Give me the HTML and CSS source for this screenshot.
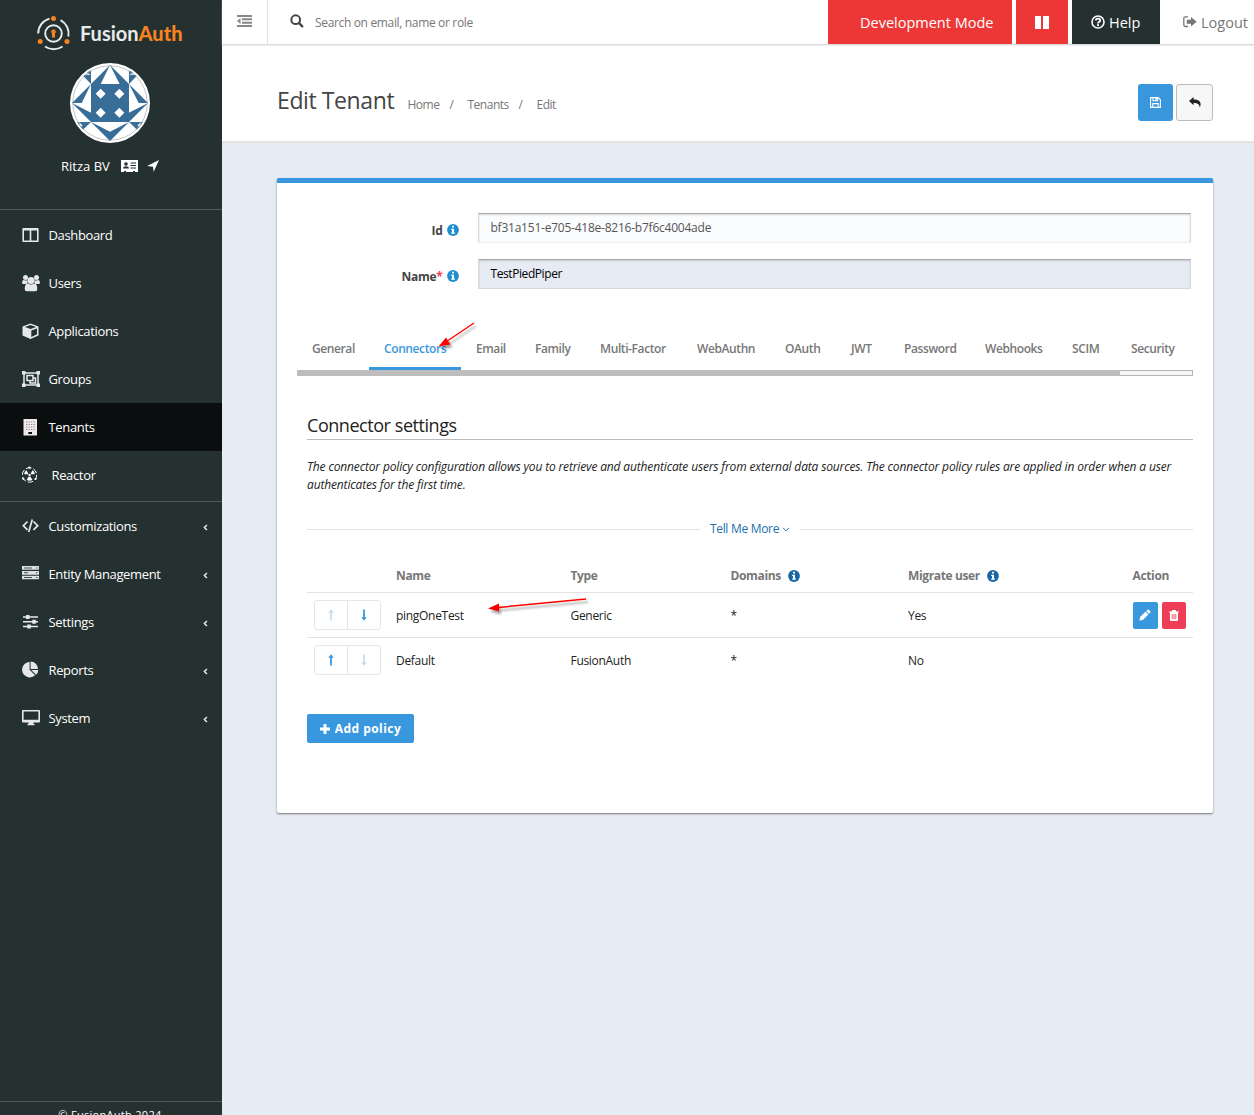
FILE: index.html
```html
<!DOCTYPE html>
<html lang="en">
<head>
<meta charset="utf-8">
<title>Edit Tenant | FusionAuth</title>
<link rel="stylesheet" href="styles.css">
</head>
<body>
<svg class="defs" width="0" height="0">
  <symbol id="info" viewBox="0 0 12 12"><circle cx="6" cy="6" r="5.900" fill="currentColor"/><path d="M5 1.800h2v1.800H5zM4.200 4.700H7v3.800h.9v1.300H4.200V8.500H5V6h-.8z" fill="#fff"/></symbol>
  <symbol id="up" viewBox="0 0 6 12"><path d="M3 .3L5.800 3.700H3.900V11.500H2.100V3.700H.2z" fill="currentColor"/></symbol>
  <symbol id="down" viewBox="0 0 6 12"><path d="M3 11.700L5.800 8.300H3.900V.5H2.100V8.300H.2z" fill="currentColor"/></symbol>
  <symbol id="chev" viewBox="0 0 5 7"><path d="M4 1L1.300 3.500 4 6" fill="none" stroke="currentColor" stroke-width="1.200"/></symbol>
</svg>
<div class="app">
  <aside class="sidebar">
    <div class="logo">
      <svg width="36" height="36" viewBox="0 0 36 36" fill="none">
        <g stroke="#e8ebeb" stroke-width="1.900">
          <path d="M13.500 2.600A15.400 15.400 0 0 0 2.200 17.500"/>
          <path d="M24.600 4.100A15.400 15.400 0 0 1 32.400 20.500"/>
          <path d="M9 30.500A15.400 15.400 0 0 0 26.500 30.500"/>
          <circle cx="17.500" cy="17.500" r="8.300"/>
        </g>
        <g fill="#f58320"><circle cx="17.500" cy="2.600" r="2.500"/><circle cx="4.200" cy="25.500" r="2.500"/><circle cx="31" cy="25.500" r="2.500"/><path d="M17.500 13.500a2.200 2.200 0 0 1 1.500 3.900v4H16v-4a2.200 2.200 0 0 1 1.500-3.900z"/></g>
      </svg>
      <span class="brand">Fusion<b>Auth</b></span>
    </div>
    <div class="avatar">
      <svg width="76" height="76" viewBox="0 0 228 228">
        <g fill="#386d98">
          <path d="M57 57h114v114H57zM114 0l57 57H57zM57 171l57 57 57-57-57 29z"/>
          <path d="M57 57L0 114h29zM0 114l57 57v-28zM171 57l57 57h-28zM228 114l-57 57v-28z"/>
          <path d="M30 29h27v28zM57 14v15L42 22zM198 29h-27v28zM171 14v15l15-7zM10 171h47l-29 28zM218 171h-47l29 28z"/>
        </g>
        <path fill="#fff" d="M114 0l29 57H86zM86 71l15 15-15 15-15-15zM142 71l15 15-15 15-15-15zM86 128l15 15-15 15-15-15zM142 128l15 15-15 15-15-15zM22 172l10 10-10 4zM206 172l-10 10 10 4z"/>
        <circle cx="114" cy="114" r="112" fill="none" stroke="#999" stroke-width="2"/>
      </svg>
    </div>
    <div class="user">
      <span>Ritza BV</span>
      <svg width="17" height="12" viewBox="0 0 17 12"><path fill="#fff" d="M0 0h17v12h-3v-1h-2v1H5v-1H3v1H0z"/><g fill="#253030"><circle cx="5" cy="4" r="1.800"/><path d="M2 8.500c0-3 6-3 6 0zM9.500 2.500H15v1H9.500zM9.500 5H15v1H9.500zM9.500 7.500H15v1H9.500z"/></g></svg>
      <svg width="12" height="12" viewBox="0 0 12 12"><path fill="#fff" d="M12 0L6.700 11.800 6 6.700.1 5.900z"/></svg>
    </div>
    <nav class="nav">
      <a><svg viewBox="0 0 18 18"><path fill="#e6e8e8" fill-rule="evenodd" d="M1.200 2h14.600q.8 0 .8.800v12.400q0 .8-.8.800H1.200q-.8 0-.8-.8V2.800q0-.8.800-.8zM2 4.500v9.900h5.700V4.500zm7.300 0v9.900H15V4.500z"/></svg><span>Dashboard</span></a>
      <a><svg viewBox="0 0 18 18"><g fill="#e6e8e8"><circle cx="3.500" cy="3.500" r="2.500"/><circle cx="14.500" cy="3.500" r="2.500"/><path d="M0 9.500q0-4 2.200-3.500 1.400 1 2.800.2l.6 2.200-1.100 1.500H1.200Q0 9.900 0 9zM18 9.500q0-4-2.200-3.500-1.400 1-2.800.2l-.6 2.200 1.100 1.500h3.300q1.200 0 1.200-.9z"/><circle cx="9" cy="6.500" r="3.600"/><path d="M2.700 15.200Q2.700 9.500 5.700 9.500q3.300 2 6.600 0 3 0 3 5.700 0 2.100-2 2.100H4.700q-2 0-2-2.100z"/></g></svg><span>Users</span></a>
      <a><svg viewBox="0 0 18 18"><path fill="#e6e8e8" fill-rule="evenodd" d="M8.500 1.500L16.500 4.400v9L8.500 17 .5 13.400v-9zM8.500 3L3 5l5.500 2L14 5zM9.300 8.500v6.400L15 12.300V6.400z"/></svg><span>Applications</span></a>
      <a><svg viewBox="0 0 18 18"><g fill="none" stroke="#e6e8e8" stroke-width="1.500"><path d="M2 3h14v12H2z"/><path d="M5 5.500h6v5H5z"/><path d="M11 8h2.500v5H8v-2.500"/></g><path fill="#e6e8e8" d="M0 1h3.500v3.500H0zM14.500 1H18v3.500h-3.500zM0 13.500h3.500V17H0zM14.500 13.500H18V17h-3.500z"/></svg><span>Groups</span></a>
      <a class="active"><svg viewBox="0 0 18 18"><path fill="#f0e8e8" d="M1.500 1h13.500v16.500H1.500z"/><path fill="none" stroke="#888" stroke-width="1.200" stroke-dasharray="1.200 1.300" d="M4 4h9.500M4 6.500h9.500M4 9h9.500M4 11.500h9.500"/><path fill="#0a0e0e" d="M6.300 14H10v2H6.300z"/></svg><span>Tenants</span></a>
      <a class="reactor"><svg viewBox="0 0 18 18"><circle cx="7.500" cy="9" r="7.200" fill="none" stroke="#fff" stroke-width="1" stroke-dasharray="5.500 2.040"/><g fill="#fff"><circle cx="7.500" cy="9" r="1.200"/><path d="M6.300 7.400L4.400 4.300Q2.300 5.500 2.200 8.200h3.600zM8.700 7.400l1.900-3.100q2.100 1.200 2.200 3.900H9.200zM6.500 10.800l-1.900 3.200q2.900 1.600 5.800 0l-1.900-3.200z"/><circle cx="7.500" cy="1.600" r="1.200"/><circle cx="1.300" cy="12.800" r="1.100"/><circle cx="13.700" cy="12.800" r="1.100"/></g></svg><span>Reactor</span></a>
    </nav>
    <nav class="nav lower">
      <a><svg viewBox="0 0 18 18"><path fill="none" stroke="#e6e8e8" stroke-width="1.700" d="M5.500 4.500L1.300 8.700l4.200 4.200M11.500 4.500l4.200 4.200-4.200 4.200M10.300 2.500L6.700 14.900"/></svg><span>Customizations</span><svg class="chev"><use href="#chev"/></svg></a>
      <a><svg viewBox="0 0 18 18"><path fill="#dfe2e2" d="M0 1h17v3.800H0zM0 5.900h17v3.800H0zM0 10.800h17v3.400H0z"/><path stroke="#444e4e" stroke-width="1" d="M2 3h8M2 7.700h4M2 12.500h8M14 3h1.500M14 7.700h1.500M14 12.500h1.500"/></svg><span>Entity Management</span><svg class="chev"><use href="#chev"/></svg></a>
      <a><svg viewBox="0 0 18 18"><path stroke="#e6e8e8" stroke-width="1.500" d="M1 4h15M1 8.800h15M1 13.500h15"/><path fill="#e6e8e8" d="M4 2h3.500v4H4zM10.300 6.800h3.500v4h-3.500zM5.300 11.500h3.500v4H5.300z"/></svg><span>Settings</span><svg class="chev"><use href="#chev"/></svg></a>
      <a><svg viewBox="0 0 18 18"><path fill="#e6e8e8" d="M7.600 1v7.800l5.500 5.500A7.700 7.700 0 1 1 7.600 1zM8.600.6a7.400 7.400 0 0 1 7.400 7.400H8.600zM9.300 9h7a7 7 0 0 1-2.200 4.800z"/></svg><span>Reports</span><svg class="chev"><use href="#chev"/></svg></a>
      <a><svg viewBox="0 0 18 18"><path fill="#e6e8e8" fill-rule="evenodd" d="M1 1h16q1 0 1 1v10.500q0 1-1 1h-5.500V15h1v1.300h-7V15h1v-1.500H1q-1 0-1-1V2q0-1 1-1zm.6 1.500v8.300h14.800V2.500z"/></svg><span>System</span><svg class="chev"><use href="#chev"/></svg></a>
    </nav>
    <footer class="foot">© FusionAuth 2024</footer>
  </aside>

  <div class="main">
    <header class="topbar">
      <div class="toggle"><svg width="15" height="12" viewBox="0 0 15 12"><path fill="#888" d="M0 0h15v2H0zM5 3.300h10v2H5zM5 6.700h10v2H5zM0 10h15v2H0zM0 6l3.500-3v6z"/></svg></div>
      <div class="search">
        <svg width="14" height="14" viewBox="0 0 14 14"><circle cx="5.700" cy="5.700" r="4.400" fill="none" stroke="#444" stroke-width="2"/><path d="M9 9l3.300 3.300" stroke="#444" stroke-width="2.400" stroke-linecap="round"/></svg>
        <span>Search on email, name or role</span>
      </div>
      <div class="dev"><span>Development Mode</span></div>
      <div class="pause"><svg width="14" height="13" viewBox="0 0 14 13"><path fill="#fff" d="M0 0h6v13H0zM8 0h6v13H8z"/></svg></div>
      <div class="help"><svg width="14" height="14" viewBox="0 0 14 14"><circle cx="7" cy="7" r="6" fill="none" stroke="#fff" stroke-width="1.600"/><path fill="none" stroke="#fff" stroke-width="1.800" d="M4.800 5.400C5 3 9.200 3.200 9.200 5.400 9.200 6.900 7 6.800 7 8.500"/><path fill="#fff" d="M6 9.300h2v1.800H6z"/></svg><span>Help</span></div>
      <div class="logout"><svg width="14" height="12" viewBox="0 0 14 12"><path fill="none" stroke="#777" stroke-width="1.300" d="M5 .9H2.500Q.8.900.8 2.600v6.200q0 1.700 1.700 1.700H5"/><path fill="#777" d="M3.800 3.700H8V.9L13.600 5.700 8 10.500V7.700H3.800z"/></svg><span>Logout</span></div>
    </header>

    <div class="pagehead">
      <h1>Edit Tenant</h1>
      <div class="crumbs"><span class="c1">Home</span><span class="s1">/</span><span class="c2">Tenants</span><span class="s2">/</span><span class="c3">Edit</span></div>
      <div class="tools">
        <button class="save"><svg width="11" height="11" viewBox="0 0 11 11"><path fill="none" stroke="#fff" stroke-width="1.100" d="M.6.600h7.600l2.200 2.200v7.600H.6zM2.800 10V6.600h5.400V10M3 .8v3h4.500v-3"/><path fill="#fff" d="M5.400 1h1.400v2.200H5.400z"/></svg></button>
        <button class="back"><svg width="12" height="11" viewBox="0 0 12 11"><path fill="#222" d="M0 4L4.600 0v2.400c5 0 7 2 7 4.700 0 1.500-.4 2.500-1 3.400 0-3-1.600-4.500-6-4.500v2.200z"/></svg></button>
      </div>
    </div>

    <section class="card">
      <div class="form">
        <label><span>Id</span><svg width="12" height="12"><use href="#info"/></svg></label><div class="input disabled">bf31a151-e705-418e-8216-b7f6c4004ade</div>
        <label><span>Name</span><em>*</em><svg width="12" height="12"><use href="#info"/></svg></label><div class="input filled">TestPiedPiper</div>
      </div>
      <div class="tabs">
        <span>General</span><span class="on">Connectors</span><span>Email</span><span>Family</span><span>Multi-Factor</span><span>WebAuthn</span><span>OAuth</span><span>JWT</span><span>Password</span><span>Webhooks</span><span>SCIM</span><span>Security</span>
      </div>
      <div class="scroll"><div class="thumb"></div></div>
      <div class="panel">
        <h2>Connector settings</h2>
        <p class="intro"><span>The connector policy configuration allows you to retrieve and authenticate users from external data sources. The connector policy rules are applied in order when a user</span> <span>authenticates for the first time.</span></p>
        <div class="more"><span>Tell Me More</span><svg width="8" height="5" viewBox="0 0 8 5"><path fill="none" stroke="#1a6fae" d="M1 .8l3 3 3-3"/></svg></div>
        <div class="table">
          <div class="row head"><span></span><span>Name</span><span>Type</span><span>Domains<svg width="12" height="12"><use href="#info"/></svg></span><span>Migrate user<svg width="12" height="12"><use href="#info"/></svg></span><span>Action</span></div>
          <div class="row"><span class="order"><b class="off"><svg width="6" height="12"><use href="#up"/></svg></b><b><svg width="6" height="12"><use href="#down"/></svg></b></span><span class="cell">pingOneTest</span><span class="cell">Generic</span><span class="cell">*</span><span class="cell">Yes</span>
            <span class="acts"><button class="edit"><svg width="12" height="12" viewBox="0 0 12 12"><path fill="#fff" d="M.5 11.500l.6-3.400 5.500-5.500 2.800 2.800-5.500 5.500zM7.300 1.900L8.500.7q.7-.5 1.300 0l1.500 1.500q.5.700 0 1.300l-1.200 1.200z"/></svg></button><button class="del"><svg width="10" height="11" viewBox="0 0 10 11"><path fill="#fff" fill-rule="evenodd" d="M3.200 0h3.600l.6 1.400H10v1.200H9V10q0 1-1 1H2q-1 0-1-1V2.600H0V1.400h2.600zM2.800 4v5.300h.8V4zm1.800 0v5.300h.8V4zm1.800 0v5.300h.8V4z"/></svg></button></span></div>
          <div class="row last"><span class="order"><b><svg width="6" height="12"><use href="#up"/></svg></b><b class="off"><svg width="6" height="12"><use href="#down"/></svg></b></span><span class="cell">Default</span><span class="cell">FusionAuth</span><span class="cell">*</span><span class="cell">No</span><span></span></div>
        </div>
        <button class="add"><svg width="10" height="10" viewBox="0 0 10 10"><path fill="#fff" d="M3.500 0h3v3.500H10v3H6.500V10h-3V6.500H0v-3h3.500z"/></svg><span>Add policy</span></button>
      </div>
    </section>
  </div>
</div>
<svg class="pointer p1" width="44" height="34" viewBox="0 0 44 34"><path stroke="#f00" stroke-width="1.400" d="M39 3L13 20.500"/><path fill="#f00" d="M3.500 26.500l7.500-9 4.500 7z"/></svg>
<svg class="pointer p2" width="108" height="24" viewBox="0 0 108 24"><path stroke="#f00" stroke-width="1.500" d="M102 4L12 12.700"/><path fill="#f00" d="M4 13.500l11-5v8z"/></svg>
</body>
</html>
```

FILE: styles.css
```css
* { box-sizing: border-box; }
body { margin: 0; font: 12px/18px "Open Sans", "Noto Sans", sans-serif; color: #222; background: #e7ebf3; letter-spacing: -.3px; }
svg { display: block; flex: none; }
button { border: 0; padding: 0; font: inherit; display: flex; align-items: center; justify-content: center; }
.defs { position: absolute; }
.app { display: flex; width: 1254px; height: 1115px; overflow: hidden; }

.sidebar { width: 222px; flex: none; background: #253030; color: #fff; display: flex; flex-direction: column; }
.logo { display: flex; height: 51px; padding: 16px 0 0 36px; gap: 8px; }
.brand { font: 700 20px/24px Lato, sans-serif; color: #e8ebeb; padding-top: 5px; letter-spacing: 0; }
.brand b { color: #f58320; }
.avatar { width: 80px; height: 80px; margin: 12px 0 0 70px; border-radius: 50%; background: #fff; padding: 2px; overflow: hidden; }
.avatar svg { border-radius: 50%; }
.user { display: flex; align-items: center; height: 20px; margin: 13px 0 33px 61px; font-size: 13px; letter-spacing: 0; }
.user span { width: 60px; white-space: nowrap; }
.user svg + svg { margin-left: 9px; }
.nav { border-top: 1px solid #4f5959; padding: 1px 0 2px; }
.nav.lower { padding: 0; }
.nav a { height: 48px; display: flex; align-items: center; padding: 0 14px 0 22px; font-size: 13px; letter-spacing: -.35px; }
.nav svg { width: 18px; height: 18px; margin-right: 8.500px; }
.nav svg.chev { width: 5px; height: 7px; margin: 3px 0 0; }
.nav span { flex: 1; }
.nav .active { background: #0a0e0e; }
.reactor span { padding-left: 3px; }
.foot { margin-top: auto; height: 14px; border-top: 1px solid #4f5959; text-align: center; font-size: 11px; line-height: 26px; overflow: hidden; letter-spacing: .3px; padding-right: 2px; }

.main { flex: 1; min-width: 0; }
.topbar { height: 45px; display: flex; background: #fff; border-bottom: 1px solid #ddd; box-shadow: 0 1px 1px #eee; position: relative; }
.topbar > div { height: 44px; display: flex; align-items: center; }
.topbar span { padding-top: 2px; }
.topbar .toggle { width: 46px; border-right: 1px solid #e3e3e3; padding: 0 0 3px 15px; }
.topbar .search { flex: 1; padding-left: 22px; gap: 11px; color: #777; letter-spacing: -.34px; }
.dev, .pause { background: #ed3737; color: #fff; }
.topbar .dev, .topbar .help, .topbar .logout { font-size: 14.500px; letter-spacing: 0; }
.topbar .dev { width: 184px; padding-left: 32px; margin-right: 4px; white-space: nowrap; }
.topbar .pause { width: 52px; justify-content: center; margin-right: 4px; }
.topbar .help { width: 88px; background: #253030; color: #fff; padding-left: 19px; gap: 4px; }
.topbar .logout { width: 94px; padding-left: 23px; gap: 4px; color: #777; }
.search svg { margin-bottom: 2px; }
.pagehead { height: 98px; background: #fff; border-bottom: 2px solid #e4e4e4; display: flex; padding: 39px 41px 0 55px; }
h1 { margin: -1px 0 0; font-weight: 400; font-size: 23px; line-height: 34px; color: #444; width: 130.500px; white-space: nowrap; letter-spacing: -.4px; }
.crumbs { flex: 1; display: flex; padding-top: 12px; color: #777; letter-spacing: -.5px; }
.c1 { width: 42px; } .s1 { width: 18px; } .c2 { width: 51px; } .s2 { width: 18px; }
.tools { display: flex; gap: 3px; }
.save { width: 35px; height: 37px; background: #3998dd; border-radius: 3px; }
.back { width: 37px; height: 37px; background: #f7f7f7; border: 1px solid #bbb; border-radius: 3px; }

.card { width: 936px; height: 635px; margin: 35px 0 0 55px; background: #fff; border-top: 5px solid #3998dd; border-radius: 2px; box-shadow: 0 1px 2px rgba(0,0,0,.5); padding: 30px 20px 0; }
.form { display: grid; grid-template-columns: 161.500px 713px; column-gap: 19.500px; row-gap: 16px; }
.form label { display: flex; align-items: center; justify-content: flex-end; padding-top: 5px; font-weight: 700; color: #444; height: 30px; }
.form label svg { color: #1d8fd1; margin: 0 0 1px 4px; }
.form em { font-style: normal; color: #ee3d56; }
.input { height: 30px; border: 1px solid #d5d9df; border-top-color: #aaa; box-shadow: inset 0 1px 2px rgba(0,0,0,.15); line-height: 27px; padding-left: 11.500px; font-size: 12px; letter-spacing: -.23px; }
.disabled { background: #fbfcfe; color: #555; border-bottom-color: #eee; }
.filled { background: #e7ebf3; color: #000; letter-spacing: -.42px; }
.tabs { height: 54px; margin-top: 27px; display: grid; grid-template-columns: 72px 92px 59px 65px 97px 88px 66px 53px 81px 87px 59px 77px; font-weight: 600; color: #777; white-space: nowrap; letter-spacing: -.4px; }
.tabs span { height: 54px; padding: 24px 0 0 15px; }
.tabs .on { color: #3998dd; border-bottom: 3px solid #3998dd; }
.scroll { height: 6px; background: #f5f5f5; border: 1px solid #b5b5b5; border-left: 0; }
.thumb { width: 823px; height: 6px; margin-top: -1px; background: #bdbdbd; }
.panel { padding: 37px 0 0 10px; }
h2 { margin: 0; height: 27px; border-bottom: 1px solid #bbb; font-weight: 400; font-size: 18px; line-height: 25px; letter-spacing: -.45px; }
.intro { margin: 18px 0 0; font-style: italic; height: 36px; white-space: nowrap; color: #222; letter-spacing: -.148px; }
.intro span { display: block; }
.more { display: flex; align-items: center; height: 18px; margin-top: 26px; color: #1a6fae; }
.more::before, .more::after { content: ""; height: 1px; background: #e2e2e2; flex: 1; }
.more span { margin-left: 10px; }
.more svg { margin: 1px 10px 0 3px; }
.row { display: grid; grid-template-columns: 89px 174.500px 160px 177.500px 224.500px 60.500px; height: 45px; align-items: center; border-bottom: 1px solid #e2e2e2; }
.row.head { height: 55px; padding-top: 21px; font-weight: 700; color: #777; letter-spacing: -.36px; }
.row.last { height: 44px; border: 0; }
.cell { padding-top: 2px; }
.head span { display: flex; align-items: center; }
.head svg { color: #1867a5; margin-left: 7px; }
.order { display: flex; width: 67px; height: 30px; margin-left: 7px; border: 1px solid #e6e6e6; border-radius: 3px; }
.order b { flex: 1; display: flex; align-items: center; justify-content: center; color: #3998dd; }
.order b + b { border-left: 1px solid #e6e6e6; }
.order .off { color: #c4dff4; }
.acts { display: flex; gap: 4px; }
.edit { width: 25px; height: 27px; border-radius: 2px; background: #3998dd; }
.del { width: 24px; height: 27px; border-radius: 2px; background: #ee3d56; }
.add { width: 107px; height: 29px; margin-top: 32px; background: #3998dd; color: #fff; border-radius: 2px; font-weight: 700; gap: 5px; letter-spacing: .47px; }
.pointer { position: absolute; filter: drop-shadow(2px 3px 1px rgba(0,0,0,.35)); }
.p1 { left: 435px; top: 320px; }
.p2 { left: 484px; top: 595px; }
```
